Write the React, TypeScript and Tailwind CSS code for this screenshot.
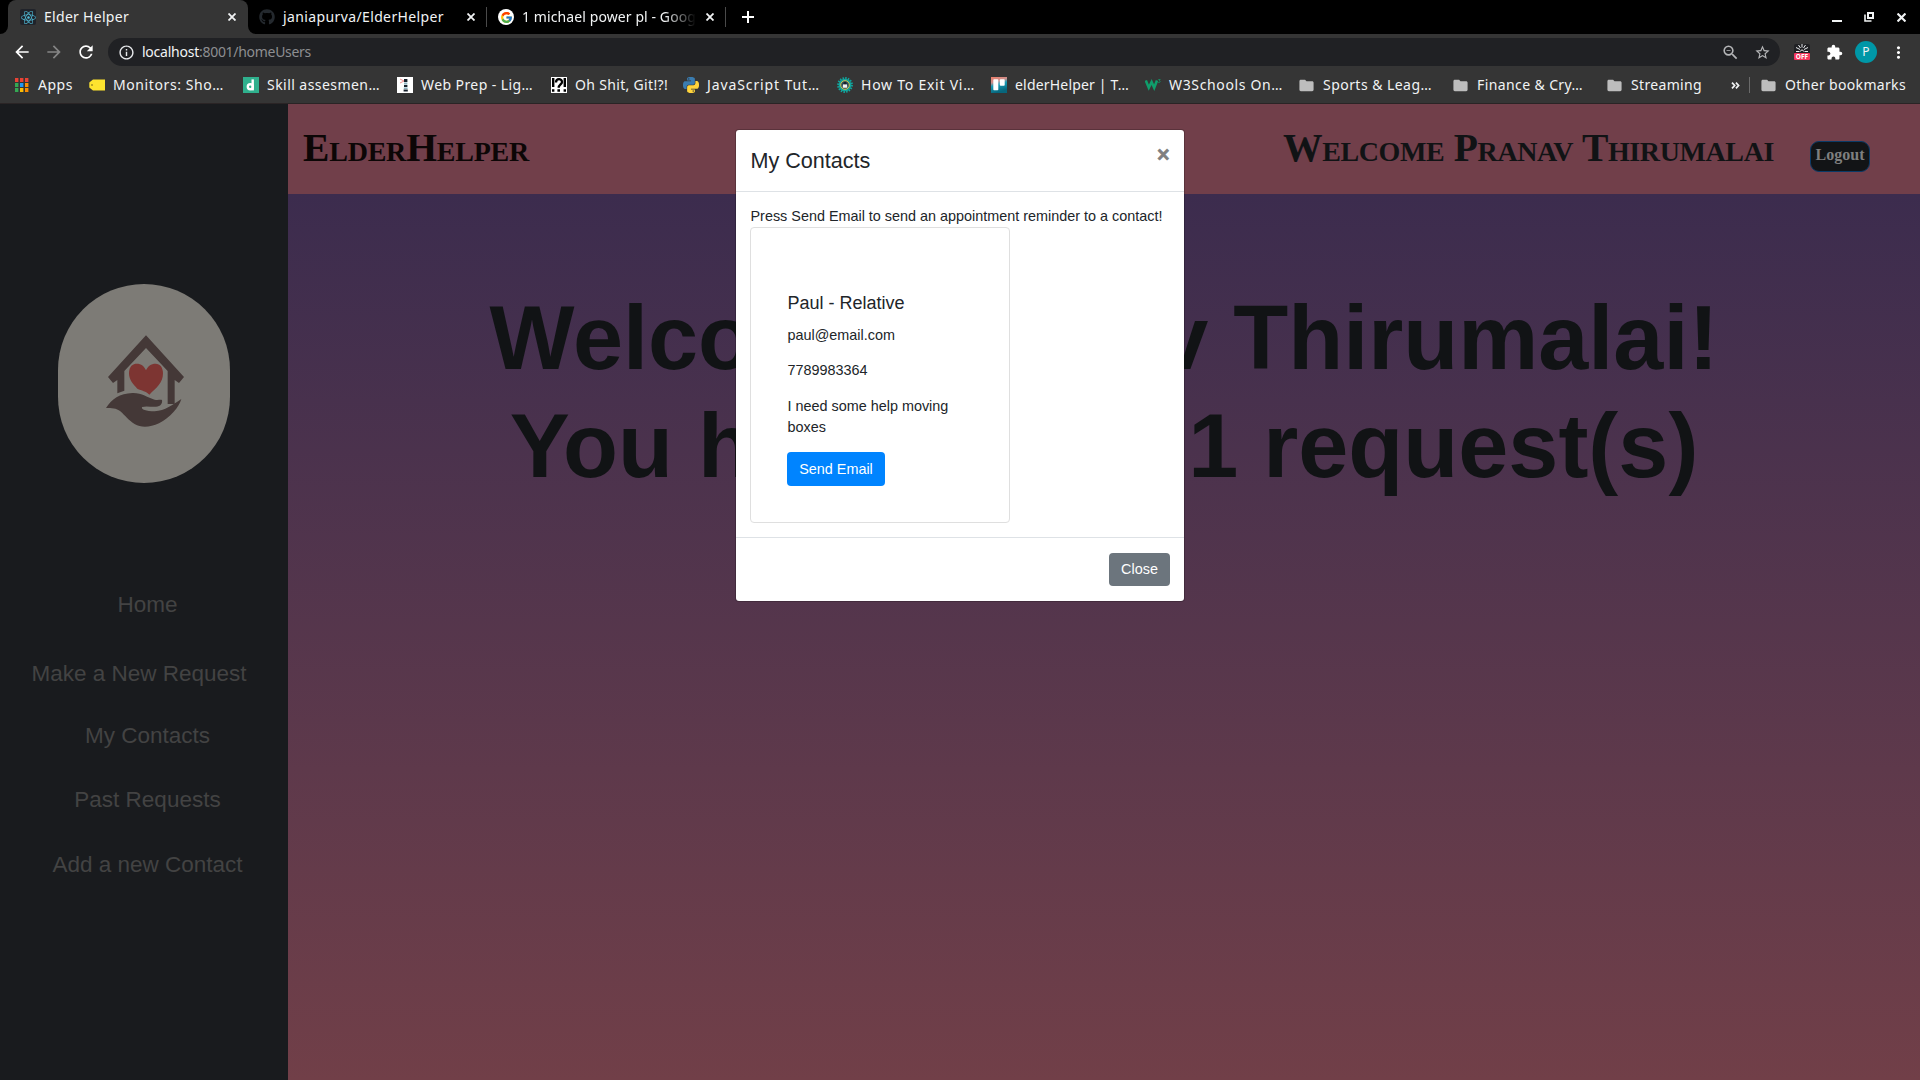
import { useLayoutEffect, useRef, type ReactNode } from "react";
import { FaGithub, FaReact } from "react-icons/fa";
import { FcGoogle } from "react-icons/fc";
import {
  MdArrowBack,
  MdArrowForward,
  MdExtension,
  MdFolder,
  MdInfoOutline,
  MdMoreVert,
  MdRefresh,
  MdStarOutline,
  MdZoomOut,
} from "react-icons/md";

/** Single-line label whose letter spacing is tuned so it spans exactly `w` pixels. */
function Fit({ w, className = "", children }: { w: number; className?: string; children: ReactNode }) {
  const ref = useRef<HTMLSpanElement>(null);
  useLayoutEffect(() => {
    const el = ref.current;
    if (!el) return;
    el.style.letterSpacing = "0px";
    const natural = el.getBoundingClientRect().width;
    const n = (el.textContent ?? "").length;
    el.style.letterSpacing = `${(w - natural) / n}px`;
  }, [w]);
  return (
    <span ref={ref} className={`inline-block shrink-0 whitespace-pre ${className}`}>
      {children}
    </span>
  );
}

function Cross({ size = 8, stroke = 1.8 }: { size?: number; stroke?: number }) {
  return (
    <svg width={size} height={size} viewBox="0 0 8 8" stroke="#f1f3f4" strokeWidth={stroke}>
      <path d="M.5.5l7 7M7.5.5l-7 7" />
    </svg>
  );
}

function AppsIcon() {
  const colors = ["#ea4335", "#ea4335", "#ea4335", "#34a853", "#2196f3", "#fb8c00", "#34a853", "#fbbc05", "#fb8c00"];
  return (
    <svg width="14" height="14" viewBox="0 0 14 14">
      {colors.map((c, i) => (
        <rect key={i} x={(i % 3) * 5} y={Math.floor(i / 3) * 5} width="3.4" height="4" fill={c} />
      ))}
    </svg>
  );
}

function TagIcon() {
  return (
    <svg width="16" height="16" viewBox="0 0 16 16">
      <path d="M4 2.5h12v11H4L.3 10.5v-5z" fill="#fde42f" />
      <circle cx="3" cy="8" r=".9" fill="#9a8a20" />
    </svg>
  );
}

function SkillIcon() {
  return (
    <svg width="16" height="16" viewBox="0 0 16 16">
      <rect width="16" height="16" fill="#2fb08d" />
      <circle cx="7.3" cy="9.8" r="2.5" fill="none" stroke="#fff" strokeWidth="2.4" />
      <path d="M9.7 2.4v11" stroke="#fff" strokeWidth="2.4" />
    </svg>
  );
}

function LighthouseIcon() {
  return (
    <svg width="16" height="16" viewBox="0 0 16 16">
      <rect width="16" height="16" fill="#fff" />
      <path d="M3 2l4 2-4 2" fill="none" stroke="#ef8f8f" strokeWidth="1" />
      <path d="M7 2h3.4v3H7zM7 8h3.4v2H7zM6.6 12.4h4.2v2H6.6z" fill="#17212c" />
      <path d="M7 5.4h3.4v2.2H7zM6.8 10.4h3.8v1.6H6.8z" fill="#8fb3c2" />
    </svg>
  );
}

function InterrobangIcon() {
  return (
    <svg width="16" height="16" viewBox="0 0 16 16">
      <rect width="16" height="16" fill="#fff" />
      <path d="M1 1h2.4v9H1zM1 12.2h2.4v2.6H1zM12.6 1H15v9h-2.4zM12.6 12.2H15v2.6h-2.4zM6.4 12.2H9v2.6H6.4z" fill="#000" />
      <path d="M5 5.4C5 1.2 11 1.2 11 5c0 2.4-3.3 2.6-3.3 5.8" fill="none" stroke="#000" strokeWidth="2.3" />
    </svg>
  );
}

const SNAKE =
  "M14.25.18l.9.2.73.26.59.3.45.32.34.34.25.34.16.33.1.3.04.26.02.2-.01.13V8.5l-.05.63-.13.55-.21.46-.26.38-.3.31-.33.25-.35.19-.35.14-.33.1-.3.07-.26.04-.21.02H8.77l-.69.05-.59.14-.5.22-.41.27-.33.32-.27.35-.2.36-.15.37-.1.35-.07.32-.04.27-.02.21v3.06H3.17l-.21-.03-.28-.07-.32-.12-.35-.18-.36-.26-.36-.36-.35-.46-.32-.59-.28-.73-.21-.88-.14-1.05-.05-1.23.06-1.22.16-1.04.24-.87.32-.71.36-.57.4-.44.42-.33.42-.24.4-.16.36-.1.32-.05.24-.01h.16l.06.01h8.16v-.83H6.18l-.01-2.75-.02-.37.05-.34.11-.31.17-.28.25-.26.31-.23.38-.2.44-.18.51-.15.58-.12.64-.1.71-.06.77-.04.84-.02 1.27.05zm-6.3 1.98l-.23.33-.08.41.08.41.23.34.33.22.41.09.41-.09.33-.22.23-.34.08-.41-.08-.41-.23-.33-.33-.22-.41-.09-.41.09z";

function PythonIcon() {
  return (
    <svg width="16" height="16" viewBox="0 0 24 24">
      <path d={SNAKE} fill="#3a7cb0" />
      <path d={SNAKE} fill="#ffd43b" transform="rotate(180 12 12)" />
    </svg>
  );
}

function GearIcon() {
  return (
    <svg width="16" height="16" viewBox="0 0 16 16">
      <circle cx="8" cy="8" r="6.9" fill="none" stroke="#11a59d" strokeWidth="2" strokeDasharray="1.5 1.21" />
      <circle cx="8" cy="8" r="6.3" fill="#11a59d" />
      <circle cx="8" cy="8" r="4.3" fill="#2c4a5a" stroke="#d8c24c" strokeWidth="1" />
      <path d="M5.8 10.8V9c0-3 4.4-3 4.4 0v1.8z" fill="#f3f3f3" />
      <circle cx="8" cy="6.2" r="1.4" fill="#17212c" />
    </svg>
  );
}

function TrelloIcon() {
  return (
    <svg width="16" height="16" viewBox="0 0 16 16">
      <defs>
        <linearGradient id="board" x1="0" y1="0" x2="0.3" y2="1">
          <stop offset="0" stopColor="#ef7d68" />
          <stop offset=".35" stopColor="#c98f8d" />
          <stop offset=".55" stopColor="#1a9bb5" />
          <stop offset="1" stopColor="#07667c" />
        </linearGradient>
      </defs>
      <rect width="16" height="16" fill="url(#board)" />
      <rect x="2.3" y="2.3" width="5" height="11" rx=".8" fill="#fff" />
      <rect x="8.8" y="2.3" width="4.9" height="6.4" rx=".8" fill="#fff" />
    </svg>
  );
}

function W3Icon() {
  return (
    <svg width="16" height="16" viewBox="0 0 16 16" fill="none" stroke="#0f9d6b">
      <path d="M.8 3.5l3 7.200L6.600 5l2.600 5.700L12 3.500" strokeWidth="2.600" />
      <path d="M13.300 2.500h1.900l-1 1.300c1.400 0 1.400 2-.9 1.700" strokeWidth=".8" />
    </svg>
  );
}

function Folder() {
  return <MdFolder className="-ml-[1px] size-[17px] text-[#bdbdbd]" />;
}

/** Bookmark geometry: total slot width, icon column width, label width. */
const bookmarks: { label: string; slot: string; col: string; w: number; icon: ReactNode }[] = [
  { label: "Apps", slot: "w-[74px]", col: "w-[23px]", w: 35, icon: <AppsIcon /> },
  { label: "Monitors: Sho…", slot: "w-[154px]", col: "w-[24px]", w: 111, icon: <TagIcon /> },
  { label: "Skill assesmen…", slot: "w-[154px]", col: "w-[24px]", w: 113, icon: <SkillIcon /> },
  { label: "Web Prep - Lig…", slot: "w-[154px]", col: "w-[24px]", w: 112, icon: <LighthouseIcon /> },
  { label: "Oh Shit, Git!?!", slot: "w-[132px]", col: "w-[24px]", w: 93, icon: <InterrobangIcon /> },
  { label: "JavaScript Tut…", slot: "w-[154px]", col: "w-[24px]", w: 113, icon: <PythonIcon /> },
  { label: "How To Exit Vi…", slot: "w-[154px]", col: "w-[24px]", w: 114, icon: <GearIcon /> },
  { label: "elderHelper | T…", slot: "w-[154px]", col: "w-[24px]", w: 114, icon: <TrelloIcon /> },
  { label: "W3Schools On…", slot: "w-[154px]", col: "w-[24px]", w: 114, icon: <W3Icon /> },
  { label: "Sports & Leag…", slot: "w-[154px]", col: "w-[24px]", w: 109, icon: <Folder /> },
  { label: "Finance & Cry…", slot: "w-[154px]", col: "w-[24px]", w: 106, icon: <Folder /> },
  { label: "Streaming", slot: "w-[124px]", col: "w-[24px]", w: 71, icon: <Folder /> },
];

function BrowserChrome() {
  return (
    <header className="h-[104px] shrink-0 overflow-hidden border-b border-[#2a2425] bg-[#353535] font-['Noto_Sans',sans-serif] text-[14px] leading-[20px] text-[#f1f3f4]">
      <div className="flex h-[34px] items-center bg-black">
        <div className="flex h-full w-[8px] items-end bg-[#353535]">
          <div className="size-full rounded-br-[8px] bg-black" />
        </div>
        <div className="flex h-full w-[240px] items-center rounded-t-[8px] bg-[#353535] pr-[12px] pl-[12px]">
          <div className="mr-[8px] flex size-[16px] items-center justify-center rounded-[2px] bg-[#20232a]">
            <FaReact className="size-[15px] text-[#4fb8d4]" />
          </div>
          <Fit w={85}>Elder Helper</Fit>
          <div className="ml-auto">
            <Cross />
          </div>
        </div>
        <div className="h-full w-[8px] bg-[#353535]">
          <div className="size-full rounded-bl-[8px] bg-black" />
        </div>
        <div className="flex w-[230px] items-center pr-[11px] pl-[3px]">
          <FaGithub className="mr-[8px] size-[16px] text-[#24292e]" />
          <Fit w={161}>janiapurva/ElderHelper</Fit>
          <div className="ml-auto">
            <Cross />
          </div>
        </div>
        <div className="h-[20px] w-px bg-[#4a4a4a]" />
        <div className="flex w-[238px] items-center pr-[11px] pl-[11px]">
          <div className="mr-[8px] flex size-[16px] items-center justify-center rounded-full bg-white">
            <FcGoogle className="size-[13px]" />
          </div>
          <div className="w-[174px] overflow-hidden [mask-image:linear-gradient(to_right,black_82%,transparent)]">
            <Fit w={174}>1 michael power pl - Goog</Fit>
          </div>
          <div className="ml-auto">
            <Cross />
          </div>
        </div>
        <div className="h-[20px] w-px bg-[#4a4a4a]" />
        <svg className="ml-[16px]" width="12" height="12" viewBox="0 0 12 12" stroke="#fff" strokeWidth="2">
          <path d="M6 0v12M0 6h12" />
        </svg>
        <div className="ml-auto flex items-center pr-[14px]">
          <div className="mt-[8px] mr-[22px] h-[2px] w-[10px] bg-[#f1f3f4]" />
          <svg className="mr-[23px]" width="10" height="10" viewBox="0 0 10 10" fill="none" stroke="#f1f3f4" strokeWidth="2">
            <path d="M4 1h5v5H4z" />
            <path d="M1 2.5V9h6.5" strokeWidth="1.6" />
          </svg>
          <Cross size={9} stroke={1.9} />
        </div>
      </div>

      <div className="flex h-[36px] items-center">
        <div className="flex w-[108px] items-center pl-[12px]">
          <MdArrowBack className="size-[20px] text-white" />
          <MdArrowForward className="ml-[12px] size-[20px] text-[#858585]" />
          <MdRefresh className="ml-[12px] size-[20px] text-white" />
        </div>
        <div className="flex h-[28px] w-[1672px] items-center rounded-full bg-[#202124] pr-[9px] pl-[10px]">
          <MdInfoOutline className="mr-[7px] size-[17px] text-[#e8eaed]" />
          <Fit w={57}>localhost</Fit>
          <Fit w={112} className="text-[#8d8e91]">
            :8001/homeUsers
          </Fit>
          <MdZoomOut className="ml-auto size-[19px] text-[#b4b5b7]" />
          <MdStarOutline className="ml-[14px] size-[17px] text-[#b4b5b7]" />
        </div>
        <div className="ml-[14px] flex h-[16px] w-[16px] flex-col items-center rounded-[2px] bg-[#202124]">
          <svg width="14" height="9" viewBox="0 0 14 9" stroke="#e8eaed" strokeWidth="1" fill="none">
            <path d="M7 0v3.5M3.5 1l2 3M10.5 1l-2 3M1 3.5L5 5.5M13 3.500L9 5.500M1 7.500h3.500M9.500 7.500H13M5.500 7.500a1.500 1.500 0 013 0" />
          </svg>
          <div className="flex h-[7px] w-[16px] items-center justify-center rounded-[1px] bg-[#f5365c] text-[6.5px] leading-[7px] font-bold text-white">
            OFF
          </div>
        </div>
        <MdExtension className="ml-[16px] size-[17px] text-white" />
        <div className="ml-[12px] flex size-[22px] items-center justify-center rounded-full bg-[#0097a7] text-[12px]">P</div>
        <MdMoreVert className="ml-[12px] size-[19px] text-white" />
      </div>

      <div className="flex h-[30px] items-center pl-[15px]">
        {bookmarks.map((b) => (
          <div key={b.label} className={`flex shrink-0 items-center ${b.slot}`}>
            <div className={`flex shrink-0 items-center ${b.col}`}>{b.icon}</div>
            <Fit w={b.w}>{b.label}</Fit>
          </div>
        ))}
        <svg width="9" height="7" viewBox="0 0 10 8" fill="none" stroke="#f1f3f4" strokeWidth="2">
          <path d="M1 .8L4 4 1 7.200M5.500 .8L8.500 4l-3 3.200" />
        </svg>
        <div className="ml-[9px] h-[16px] w-px bg-[#6a6a6a]" />
        <div className="ml-[11px] flex items-center">
          <div className="flex w-[24px] items-center">
            <Folder />
          </div>
          <Fit w={121}>Other bookmarks</Fit>
        </div>
      </div>
    </header>
  );
}

function Logo() {
  return (
    <svg className="mt-[180px] h-[199px] w-[172px] shrink-0 self-center rounded-full bg-[#7d7b76]" viewBox="54 42 516 597">
      <path
        d="M318 196L432 321 417 339 404 330V402H383V303L318 234 253 303V362L232 370V330L219 339 204 321z"
        fill="#443837"
      />
      <path
        d="M328 374C318 362 305 363 292 356C278 342 267 328 267 310C267 288 279 281 290 281C304 281 313 289 318 301C323 289 333 281 347 281C360 281 369 292 369 310C369 340 349 353 328 374z"
        fill="#7d3532"
      />
      <path
        d="M198 414C214 388 240 370 277 369C305 368 322 383 344 389C354 391 362 388 366 390C368 400 362 410 348 410C334 411 318 407 306 411C303 418 318 424 344 424C375 422 398 404 424 387C418 410 390 444 357 460C330 473 302 473 285 463C265 451 255 436 241 424C229 414 215 414 198 414z"
        fill="#443837"
      />
    </svg>
  );
}

function Sidebar() {
  return (
    <aside className="flex w-[288px] shrink-0 flex-col bg-[#191b1e] text-center text-[22.5px] leading-[33px] text-[#434343]">
      <Logo />
      <a className="mt-[105px] block pl-[7px]">Home</a>
      <a className="mt-[36px] block pr-[10px]">Make a New Request</a>
      <a className="mt-[29px] block pl-[7px]">My Contacts</a>
      <a className="mt-[31px] block pl-[7px]">Past Requests</a>
      <a className="mt-[32px] block pl-[7px]">Add a new Contact</a>
    </aside>
  );
}

function ContactsModal() {
  return (
    <div className="absolute top-[129px] left-[735px] w-[450px] rounded-[4px] border border-black/20 bg-white bg-clip-padding text-[14.4px] leading-[21px] text-[#212529]">
      <div className="flex h-[62px] items-start justify-between border-b border-[#dee2e6] px-[14.4px] pt-[15px]">
        <h5 className="text-[21.6px] leading-[32px]">My Contacts</h5>
        <span className="-mt-px text-[21.6px] leading-[21px] font-bold text-[#7f7f7f] [-webkit-text-stroke:0.6px_#7f7f7f]">×</span>
      </div>
      <div className="px-[14px] pt-[14px] pb-[14px]">
        <p className="pl-[0.5px] whitespace-nowrap">Press Send Email to send an appointment reminder to a contact!</p>
        <div className="h-[296px] w-[260px] rounded-[4px] border border-[#dfdfdf] pt-[65px] pr-[36px] pl-[36px]">
          <h5 className="pl-[0.5px] text-[18px] leading-[21px]">Paul - Relative</h5>
          <p className="mt-[11px] pl-[0.5px]">paul@email.com</p>
          <p className="mt-[14px] pl-[0.5px]">7789983364</p>
          <p className="mt-[15px] pl-[0.5px]">I need some help moving boxes</p>
          <button className="mt-[14px] h-[34px] w-[98px] rounded-[4px] bg-[#0084ff] text-white">Send Email</button>
        </div>
      </div>
      <div className="flex h-[64px] justify-end border-t border-[#dee2e6] pt-[15px] pr-[14px]">
        <button className="h-[33px] w-[61px] rounded-[4px] bg-[#6c757d] text-white">Close</button>
      </div>
    </div>
  );
}

export default function App() {
  return (
    <div className="relative flex h-[1080px] w-[1920px] flex-col overflow-hidden bg-black font-['Liberation_Sans',Arial,sans-serif]">
      <BrowserChrome />
      <div className="flex min-h-0 flex-1">
        <Sidebar />
        <main className="flex min-w-0 flex-1 flex-col">
          <nav className="flex h-[90px] shrink-0 items-center bg-[#713f4a] pl-[15px] font-['Liberation_Serif',serif] font-bold">
            <Fit w={226} className="-mt-[2px] text-[39.6px] leading-[48px] text-[#0c0606] [font-variant:small-caps]">
              ElderHelper
            </Fit>
            <Fit w={491} className="-mt-[2px] mr-[36px] ml-auto text-[39.6px] leading-[48px] text-[#111315] [font-variant:small-caps]">
              Welcome Pranav Thirumalai
            </Fit>
            <button className="mt-[15px] mr-[50px] h-[31px] w-[60px] rounded-[9px] border border-[#0a3a66] bg-[#121416] pb-[3px] text-[16px] leading-[20px] text-[#7f7f7f]">
              <Fit w={49}>Logout</Fit>
            </button>
          </nav>
          <section className="flex-1 bg-linear-to-b from-[#3c2c4e] to-[#713f48] pt-[90px] text-center text-[90px] leading-[108px] font-bold text-[#111315]">
            <h1>Welcome Pranav Thirumalai!</h1>
            <h1>You have made 1 request(s)</h1>
          </section>
        </main>
      </div>
      <ContactsModal />
    </div>
  );
}
